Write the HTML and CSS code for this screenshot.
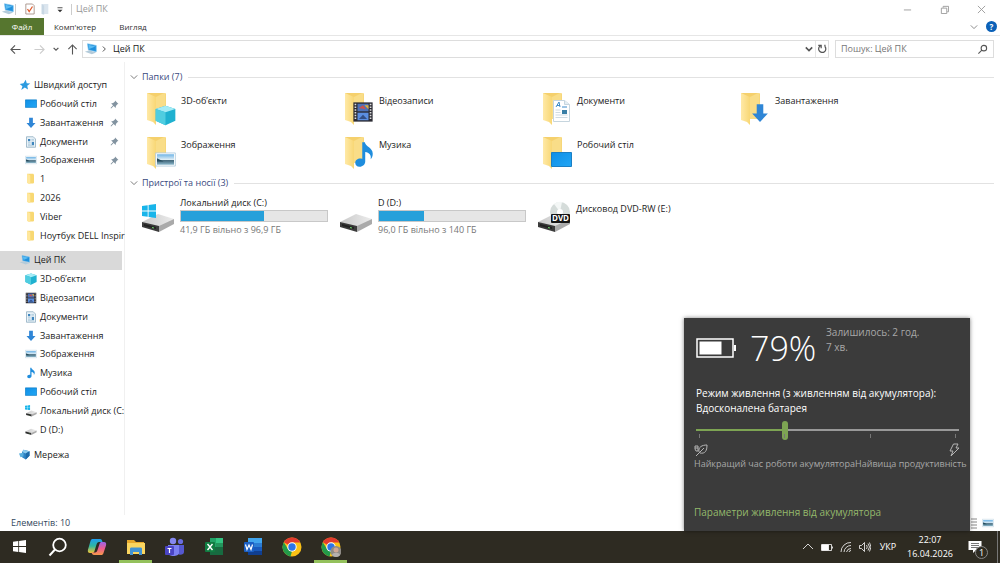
FILE: index.html
```html
<!DOCTYPE html>
<html lang="uk">
<head>
<meta charset="utf-8">
<title>Цей ПК</title>
<meta name="viewport" content="width=device-width, initial-scale=1.0">
<link rel="stylesheet" href="styles.css">
</head>
<body>
<!-- shared icons -->
<svg class="sprite" aria-hidden="true">
<defs>
<linearGradient id="gFolder" x1="0" x2="1"><stop offset="0" stop-color="#ffe9a6"/><stop offset="1" stop-color="#f8d775"/></linearGradient>
<linearGradient id="gBlue" x1="0" y1="0" x2="1" y2="1"><stop offset="0" stop-color="#0f8fe6"/><stop offset="1" stop-color="#22a6f5"/></linearGradient>
<linearGradient id="gDrive" x1="0" x2="1"><stop offset="0" stop-color="#c9c9c9"/><stop offset="1" stop-color="#ececec"/></linearGradient>
<linearGradient id="gSky" x1="0" y1="0" x2="0" y2="1"><stop offset="0" stop-color="#6fb4e6"/><stop offset=".5" stop-color="#dcecf5"/><stop offset=".6" stop-color="#41677a"/><stop offset="1" stop-color="#8bb8cc"/></linearGradient>
<linearGradient id="gPilot1" x1="0" y1="0" x2="0" y2="1"><stop offset="0" stop-color="#1f9df0"/><stop offset=".5" stop-color="#2fb7a0"/><stop offset="1" stop-color="#f4c534"/></linearGradient>
<linearGradient id="gPilot2" x1="0" y1="0" x2="0" y2="1"><stop offset="0" stop-color="#9a63e8"/><stop offset=".5" stop-color="#ec5c8f"/><stop offset="1" stop-color="#f79a4b"/></linearGradient>
</defs>
<symbol id="i-pc" viewBox="0 0 16 16"><path d="M4 2l10 2v7L5 9z" fill="#1f8fdc" stroke="#7ac3ee" stroke-width=".8"/><path d="M5 3l8 2-7 3z" fill="#5bbcf2"/><path d="M1 11l5-1.500 8 2.500-5 2z" fill="#b4cbda"/></symbol>
<symbol id="i-star" viewBox="0 0 16 16"><path d="M9 1l1.300 4.700L15 6l-4 3 1 5-4.300-2.600L3 14.500l1.600-5L1 6.500l5-.8z" fill="#2b9be0"/></symbol>
<symbol id="i-desk" viewBox="0 0 16 16"><path d="M.5 2.500h15v10H.5z" fill="url(#gBlue)" stroke="#1280ca"/></symbol>
<symbol id="i-down" viewBox="0 0 16 16"><path d="M5.500 1h5v7H14l-6 6.500L2 8h3.500z" fill="#2f86d6"/></symbol>
<symbol id="i-doc" viewBox="0 0 16 16"><path d="M2 1h9l3 3v11H2z" fill="#e9f2f8" stroke="#8aa9bd"/><path d="M4 4h3v3H4zM9 8h3v4H9z" fill="#3f86be"/><path d="M8.500 4.500H12M8.500 6.500H12M4 9h3.500M4 11h3.500M4 13h8" stroke="#8fb3cb" stroke-width=".8"/></symbol>
<symbol id="i-pic" viewBox="0 0 16 16"><path d="M.5 3h15v10H.5z" fill="#fff" stroke="#a9c7da" stroke-width=".6"/><path d="M1.500 4h13v8h-13z" fill="url(#gSky)"/><path d="M1.500 7l5 2.500h-5z" fill="#244c5c"/></symbol>
<symbol id="i-fold" viewBox="0 0 16 16"><path d="M3 1h8l1 1v11l-1 1H4l-1-1z" fill="#f8d873"/><path d="M3 1l4 2v12l-4-2z" fill="#ffe79c"/></symbol>
<symbol id="i-cube" viewBox="0 0 16 16"><path d="M8 .5l7.500 2.500v9L8 15.500.5 12V3z" fill="#1fb1d0"/><path d="M8 .5L15.500 3 8 5.500.5 3z" fill="#a5ecf6"/><path d="M.5 3L8 5.500v10L.5 12z" fill="#4fcde0"/></symbol>
<symbol id="i-film" viewBox="0 0 16 16"><path d="M1 1h14v14H1z" fill="#2b2b33"/><path d="M4 2h8v5.500H4z" fill="#4d72b8"/><path d="M4 8.500h8V14H4z" fill="#5b8ee0"/><path d="M5 5l3-2 2 3z" fill="#d0504a"/><path d="M9 3h3v3z" fill="#dfb03c"/><path d="M5 13l3-3 3 3z" fill="#334f85"/><path d="M2.500 2v12M13.500 2v12" stroke="#ddd" stroke-width="1.200" stroke-dasharray="1 1"/></symbol>
<symbol id="i-note" viewBox="0 0 16 16"><path d="M7 1h1.500c.3 2.500 4.500 3 4.500 6.500 0 1.300-.5 2.500-1.200 3.200C12.300 8 11 7 8.700 6.500V12c0 1.700-1.500 3-3.200 3S3 14 3 12.700 4.300 10.300 5.900 10.300c.4 0 .8.100 1.100.2z" fill="#1f8ddd"/></symbol>
<symbol id="i-drive" viewBox="0 0 34 20"><path d="M1 10L17 2l16 5-15 9z" fill="url(#gDrive)"/><path d="M1 10l17 4v6L1 15z" fill="#3b3b3b"/><path d="M18 14l15-7v5l-15 8z" fill="#aaa"/><path d="M3 12l12 3v2L3 14z" fill="#222"/><path d="M11 15.500l2 .5" stroke="#6ed86a"/></symbol>
<symbol id="i-win" viewBox="0 0 16 16"><path d="M0 2.300l6.500-1v6.200H0zM7.500 1.200L16 0v7.500H7.500zM0 8.500h6.500v6.200L0 13.800zM7.500 8.500H16V16l-8.500-1.200z" fill="currentColor"/></symbol>
<symbol id="i-net" viewBox="0 0 16 16"><path d="M6 1l8 2v6l-5 5-5-3V4z" fill="#2d83c4"/><path d="M6 1l8 2-5 3-5-2z" fill="#8ccbee"/><path d="M0 6l6-1v5l-4 1z" fill="#57aede"/><path d="M9 6l5-3v6l-5 5z" fill="#1c69a8"/></symbol>
<symbol id="i-pin" viewBox="0 0 16 16"><path d="M9 1l6 6-2 .5-2.500 3L10 14 6.500 10.500 2 15l-1-1 4.500-4.500L2 6l3.500-.5 3-2.500z" fill="#8293a0"/></symbol>
<symbol id="i-chev" viewBox="0 0 10 10"><path d="M1 3l4 4 4-4" fill="none" stroke="currentColor" stroke-width="1.200"/></symbol>
<symbol id="i-bigfold" viewBox="0 0 32 34"><path d="M2 1h18l1 1v25H7z" fill="#f5d06c"/><path d="M2 1l9 4v28l-3-3-6-2z" fill="url(#gFolder)"/><path d="M11 5l8-4h1.500v26H11z" fill="#f9dd88"/></symbol>
<symbol id="i-chrome" viewBox="0 0 20 20"><circle cx="10" cy="10" r="9.500" fill="#fbc116"/><path d="M10 10L1.800 5.200A9.500 9.500 0 0 1 18.300 5.500H10z" fill="#e33b2e"/><path d="M1.800 5.200l4.300 7 3.900 2-1.500 5.200A9.500 9.500 0 0 1 1.800 5.200z" fill="#229a4a"/><circle cx="10" cy="10" r="4.700" fill="#fff"/><circle cx="10" cy="10" r="3.700" fill="#2d75e8"/></symbol>
</svg>

<div class="window">
<header class="titlebar">
<svg class="ic16 app"><use href="#i-pc"/></svg>
<span class="sep"></span>
<button class="quick" aria-label="Властивості"><svg viewBox="0 0 12 14"><path d="M1 1h8l2 2v10H1z" fill="#fff" stroke="#a08a80"/><path d="M3 7l2 3 4-6" fill="none" stroke="#e0592a" stroke-width="1.500"/></svg></button>
<button class="quick" aria-label="Нова папка"><svg viewBox="0 0 12 14"><path d="M2 1h8v12H2z" fill="#dbe5ee"/><path d="M2 1l3 2v11l-3-1z" fill="#c8d7e4"/></svg></button>
<button class="quick" aria-label="Налаштувати"><svg viewBox="0 0 12 14"><path d="M3 5.500h6" stroke="#333"/><path d="M3 8h6l-3 3z" fill="#333"/></svg></button>
<span class="sep"></span>
<h1>Цей ПК</h1>
<div class="controls">
<button aria-label="Згорнути"><svg viewBox="0 0 10 10"><path d="M1 5.500h8"/></svg></button>
<button aria-label="Відновити"><svg viewBox="0 0 10 10"><path d="M1.500 3.500h6v6h-6zM3.500 3V1.500h6v6H8"/></svg></button>
<button aria-label="Закрити"><svg viewBox="0 0 10 10"><path d="M1 1l8 8M9 1L1 9"/></svg></button>
</div>
</header>

<nav class="tabs">
<button class="file">Файл</button>
<button>Комп'ютер</button>
<button>Вигляд</button>
<div class="tabs-right">
<button class="expand" aria-label="Розгорнути стрічку"><svg class="ic10"><use href="#i-chev"/></svg></button>
<button class="help" aria-label="Довідка">?</button>
</div>
</nav>

<div class="address">
<button aria-label="Назад"><svg viewBox="0 0 12 12"><path d="M11.500 6H1M5.500 1.500L1 6l4.500 4.500"/></svg></button>
<button class="off" aria-label="Вперед"><svg viewBox="0 0 12 12"><path d="M.5 6H11M6.500 1.500L11 6l-4.500 4.500"/></svg></button>
<button class="tiny" aria-label="Останні розташування"><svg viewBox="0 0 10 10"><path d="M1 3l4 4 4-4"/></svg></button>
<button class="up" aria-label="Вгору"><svg viewBox="0 0 12 12"><path d="M6 11.500V1M1.500 5.500L6 1l4.500 4.500"/></svg></button>
<div class="path">
<svg class="ic16"><use href="#i-pc"/></svg>
<svg class="crumb" viewBox="0 0 6 8"><path d="M1 1l3 3-3 3"/></svg>
<span>Цей ПК</span>
<button class="drop" aria-label="Попередні розташування"><svg viewBox="0 0 10 10"><path d="M1 3l4 4 4-4"/></svg></button>
<button class="reload" aria-label="Оновити"><svg viewBox="0 0 12 12"><path d="M9.500 3A4.300 4.300 0 1 1 4 2.200M1.500 1.500H5V5M9.500 3V1" /></svg></button>
</div>
<div class="search">
<input type="search" aria-label="Пошук" placeholder="Пошук: Цей ПК">
<svg viewBox="0 0 12 12"><circle cx="7.500" cy="4.500" r="3"/><path d="M5.300 6.700L1.500 10.500"/></svg>
</div>
</div>

<div class="body">
<aside>
<ul class="tree">
<li class="top"><svg class="ic12"><use href="#i-star"/></svg><a href="#">Швидкий доступ</a></li>
<li><svg class="ic12"><use href="#i-desk"/></svg><a href="#">Робочий стіл</a><svg class="pin"><use href="#i-pin"/></svg></li>
<li><svg class="ic12"><use href="#i-down"/></svg><a href="#">Завантаження</a><svg class="pin"><use href="#i-pin"/></svg></li>
<li><svg class="ic12"><use href="#i-doc"/></svg><a href="#">Документи</a><svg class="pin"><use href="#i-pin"/></svg></li>
<li><svg class="ic12"><use href="#i-pic"/></svg><a href="#">Зображення</a><svg class="pin"><use href="#i-pin"/></svg></li>
<li><svg class="ic12"><use href="#i-fold"/></svg><a href="#">1</a></li>
<li><svg class="ic12"><use href="#i-fold"/></svg><a href="#">2026</a></li>
<li><svg class="ic12"><use href="#i-fold"/></svg><a href="#">Viber</a></li>
<li><svg class="ic12"><use href="#i-fold"/></svg><a href="#">Ноутбук DELL Inspir</a></li>
</ul>
<ul class="tree pc">
<li class="top selected"><svg class="ic12"><use href="#i-pc"/></svg><a href="#">Цей ПК</a></li>
<li><svg class="ic12"><use href="#i-cube"/></svg><a href="#">3D-об’єкти</a></li>
<li><svg class="ic12"><use href="#i-film"/></svg><a href="#">Відеозаписи</a></li>
<li><svg class="ic12"><use href="#i-doc"/></svg><a href="#">Документи</a></li>
<li><svg class="ic12"><use href="#i-down"/></svg><a href="#">Завантаження</a></li>
<li><svg class="ic12"><use href="#i-pic"/></svg><a href="#">Зображення</a></li>
<li><svg class="ic12"><use href="#i-note"/></svg><a href="#">Музика</a></li>
<li><svg class="ic12"><use href="#i-desk"/></svg><a href="#">Робочий стіл</a></li>
<li><svg class="ic12 cyan" viewBox="0 0 16 16"><use href="#i-win" width="7" height="7"/><use href="#i-drive" x="1" y="6" width="15" height="10"/></svg><a href="#">Локальний диск (C:</a></li>
<li><svg class="ic12" viewBox="0 0 16 16"><use href="#i-drive" y="5" width="16" height="10"/></svg><a href="#">D (D:)</a></li>
</ul>
<ul class="tree net">
<li class="top"><svg class="ic12"><use href="#i-net"/></svg><a href="#">Мережа</a></li>
</ul>
</aside>

<main>
<h2><svg class="ic10"><use href="#i-chev"/></svg>Папки (7)</h2>
<div class="tiles">
<a class="tile" href="#"><svg viewBox="0 0 32 34"><use href="#i-bigfold"/><use href="#i-cube" x="10" y="13" width="21" height="21"/></svg><span>3D-об’єкти</span></a>
<a class="tile" href="#"><svg viewBox="0 0 32 34"><use href="#i-bigfold"/><use href="#i-film" x="9" y="8" width="22" height="24"/></svg><span>Відеозаписи</span></a>
<a class="tile" href="#"><svg viewBox="0 0 32 34"><use href="#i-bigfold"/><path d="M12.500 8.500h11l5 4v17h-16z" fill="#fff" stroke="#c6d5de"/><path d="M23.500 8.500v4h5" fill="#e4eef4" stroke="#c6d5de"/><path d="M15 15l3-5 1 5M16 13.500h3M21 15h5" stroke="#3c8bc9" fill="none"/><path d="M21 18h5v4h-5z" fill="#3a7fa6"/><path d="M14.500 18h5M14.500 20.500h5M14.500 23h12M14.500 25.500h12" stroke="#c3d2dc" stroke-width=".8"/></svg><span>Документи</span></a>
<a class="tile" href="#"><svg viewBox="0 0 32 34"><use href="#i-bigfold"/><use href="#i-down" x="10" y="11" width="22" height="21"/></svg><span>Завантаження</span></a>
<a class="tile" href="#"><svg viewBox="0 0 32 34"><use href="#i-bigfold"/><use href="#i-pic" x="10" y="13" width="21" height="21"/></svg><span>Зображення</span></a>
<a class="tile" href="#"><svg viewBox="0 0 32 34"><use href="#i-bigfold"/><use href="#i-note" x="7" y="4" width="28" height="29"/></svg><span>Музика</span></a>
<a class="tile" href="#"><svg viewBox="0 0 32 34"><use href="#i-bigfold"/><path d="M10.500 16.500h20v14h-20z" fill="url(#gBlue)" stroke="#1b7fc4"/></svg><span>Робочий стіл</span></a>
</div>

<h2><svg class="ic10"><use href="#i-chev"/></svg>Пристрої та носії (3)</h2>
<div class="tiles drives">
<a class="drive" href="#"><svg class="cyan" viewBox="0 0 34 32"><use href="#i-drive" y="11" width="34" height="20"/><use href="#i-win" x="1" y="3" width="14" height="14"/></svg>
<div><b>Локальний диск (C:)</b><div class="bar"><i style="width: 57%"></i></div><small>41,9 ГБ вільно з 96,9 ГБ</small></div></a>
<a class="drive" href="#"><svg viewBox="0 0 34 32"><use href="#i-drive" y="11" width="34" height="20"/></svg>
<div><b>D (D:)</b><div class="bar"><i style="width: 31%"></i></div><small>96,0 ГБ вільно з 140 ГБ</small></div></a>
<a class="drive dvd" href="#"><svg viewBox="0 0 34 32"><use href="#i-drive" y="11" width="34" height="20"/><circle cx="23" cy="11" r="10" fill="#d5dcda"/><path d="M23 11L17 3a10 10 0 0 1 8-2z" fill="#f4f7f6"/><circle cx="23" cy="11" r="3" fill="#fff"/><rect x="14" y="13" width="19" height="9" rx="1" fill="#151515"/><text x="15" y="20">DVD</text></svg>
<div><b>Дисковод DVD-RW (E:)</b></div></a>
</div>
</main>
</div>

<footer class="status">
<span>Елементів: 10</span>
<div class="views">
<button aria-label="Подробиці"><svg viewBox="0 0 12 12"><path d="M1 2h2M5 2h6M1 5h2M5 5h6M1 8h2M5 8h6M1 11h2M5 11h6" stroke="#888"/></svg></button>
<button aria-label="Великі ескізи"><svg><use href="#i-pic"/></svg></button>
</div>
</footer>
</div>

<section class="battery">
<div class="charge">
<svg class="cell" viewBox="0 0 40 20"><path d="M1 1h36v18H1z" fill="none" stroke="#fff" stroke-width="1.500"/><path d="M38 7h2v6h-2z" fill="#fff"/><path d="M3.500 3.500h22v13h-22z" fill="#fff"/></svg>
<strong>79%</strong>
<p>Залишилось: 2 год.<br>7 хв.</p>
</div>
<label for="mode">Режим живлення (з живленням від акумулятора): Вдосконалена батарея</label>
<input type="range" id="mode" min="0" max="3" value="1">
<div class="ticks"><i></i><i></i><i></i><i></i></div>
<div class="ends">
<div><svg viewBox="0 0 14 14"><path d="M5 9c-1-5 3-7 8-7 0 6-2 9-7 8M2 13l8-8M1 3h3v5H2L1 6zM1 5h3"/></svg><span>Найкращий час роботи акумулятора</span></div>
<div><svg viewBox="0 0 14 14"><path d="M6.500 1H11L9 5h3L4 13l2-5H3z"/></svg><span>Найвища продуктивність</span></div>
</div>
<a href="#">Параметри живлення від акумулятора</a>
</section>

<div class="taskbar">
<button class="start" aria-label="Пуск"><svg class="s14"><use href="#i-win"/></svg></button>
<button aria-label="Пошук"><svg viewBox="0 0 20 20"><circle cx="11.500" cy="8" r="6.300" fill="none" stroke="#fff" stroke-width="1.800"/><path d="M7 12.500L1.500 18.500" stroke="#fff" stroke-width="2"/></svg></button>
<button aria-label="Copilot"><svg viewBox="0 0 20 20"><path d="M6 2h7c1.500 0 2 1 2.500 3H12c-1.500 0-2 1-2.500 2.500L7.500 14c-.5 1.500-1 2-2.500 2H3c-2 0-2.500-1.500-2-3.500L3.500 4C4 2.500 4.500 2 6 2z" fill="url(#gPilot1)"/><path d="M14 18H7c-1.500 0-2-1-2.500-2.500H8c1.500 0 2-1 2.500-2.500l2-6c.5-1.500 1-2 2.500-2h2c2 0 2.500 1.500 2 3.500L16.500 16c-.5 1.500-1 2-2.500 2z" fill="url(#gPilot2)"/></svg></button>
<button class="running" aria-label="Провідник"><svg viewBox="0 0 20 20"><path d="M1 3h7l2 2h8v3H1z" fill="#e7a92c"/><path d="M1 6h18v11H1z" fill="#fbd660"/><path d="M4 18v-6c0-1 .5-1.500 1.500-1.500h9c1 0 1.500.5 1.500 1.500v6h-3v-3H7v3z" fill="#4293d3"/></svg></button>
<button aria-label="Teams"><svg viewBox="0 0 20 20"><circle cx="8" cy="4" r="3.200" fill="#8588f0"/><circle cx="15.500" cy="4.500" r="2.600" fill="#6a6de0"/><path d="M12 8h7v7c0 3-5 4-7 1z" fill="#5558d0"/><path d="M3 8h11v8c0 4-11 4-11 0z" fill="#7b7ff2"/><rect y="9" width="9" height="9" rx="1" fill="#4a44c4"/><path d="M2.500 11.500h4M4.500 11.500V16" stroke="#fff" stroke-width="1.200"/></svg></button>
<button aria-label="Excel"><svg viewBox="0 0 20 20"><path d="M6 1h6v9H6z" fill="#21a366"/><path d="M12 1h7v5h-7z" fill="#33c481"/><path d="M12 6h7v4h-7z" fill="#23965c"/><path d="M6 10h13v8H6z" fill="#176b40"/><rect x="1" y="5" width="10" height="10" rx="1" fill="#107c41"/><path d="M3.500 7l5 6M8.500 7l-5 6" stroke="#fff" stroke-width="1.400"/></svg></button>
<button aria-label="Word"><svg viewBox="0 0 20 20"><path d="M5 1h14v5H5z" fill="#41a5ee"/><path d="M5 6h14v4H5z" fill="#2b7cd3"/><path d="M5 10h14v4H5z" fill="#185abd"/><path d="M5 14h14v4H5z" fill="#103f91"/><rect x="1" y="5" width="10" height="10" rx="1" fill="#1a5fc4"/><path d="M2.500 7.500l1.500 5 2-4.500 2 4.500 1.500-5" fill="none" stroke="#fff" stroke-width="1.200"/></svg></button>
<button aria-label="Chrome"><svg><use href="#i-chrome"/></svg></button>
<button class="running" aria-label="Chrome, профіль"><svg viewBox="0 0 20 20"><use href="#i-chrome"/><circle cx="15" cy="14.500" r="5.500" fill="#8f8b86"/><circle cx="15" cy="13" r="2.500" fill="#d0a795"/><path d="M11 18c1-3 7-3 8 0-2 2.500-6 2.500-8 0z" fill="#b6b0ae"/></svg></button>

<div class="tray">
<button aria-label="Приховані піктограми"><svg viewBox="0 0 12 12"><path d="M1 8l5-5 5 5"/></svg></button>
<button aria-label="Батарея"><svg viewBox="0 0 12 12"><path d="M.5 3.500h10v6H.5zM11.500 5.500v2"/><path d="M1 4h6.500v5H1z" fill="#fff"/></svg></button>
<button aria-label="Мережа"><svg viewBox="0 0 12 12"><path d="M1 11A9.500 9.500 0 0 1 11 1.500M4 11A7 7 0 0 1 11 4.500M6.500 11A4.500 4.500 0 0 1 11 7.500M9 11a2 2 0 0 1 2-1.500"/></svg></button>
<button aria-label="Гучність"><svg viewBox="0 0 12 12"><path d="M.5 4.500h2L5.500 1.500v9l-3-3h-2zM7.500 4q1.500 2 0 4M9 2.500q3 3.500 0 7M10.500 1.500q3 4.500 0 9"/></svg></button>
<button class="lang">УКР</button>
<button class="clock"><time>22:07</time><time>16.04.2026</time></button>
<button class="notes" aria-label="Сповіщення"><svg viewBox="0 0 14 14"><path d="M.5 1h13v9H8l-3 3v-3H.5z" fill="#fff"/><path d="M3 3.500h8M3 5.500h8M3 7.500h8" stroke="#555" stroke-width=".8"/></svg><span>1</span></button>
</div>
</div>
</body>
</html>
```
FILE: styles.css
```css
* { box-sizing: border-box; }
body {
    margin: 0;
    display: flex;
    flex-direction: column;
    height: 100vh;
    overflow: hidden;
    position: relative;
    background: #fff;
    color: #222;
    font: 9px/14px "Open Sans", "Noto Sans", sans-serif;
}
button {
    border: 0;
    padding: 0;
    background: none;
    color: inherit;
    font: inherit;
    display: flex;
    align-items: center;
    justify-content: center;
}
a { color: inherit; text-decoration: none; }
svg { display: block; flex: none; }
.sprite { position: absolute; width: 0; height: 0; }
.ic16 { width: 14px; height: 14px; }
.ic12 { width: 12px; height: 12px; }
.ic10 { width: 8px; height: 8px; }
.cyan { color: #19b5ea; }

.window {
    flex: 1;
    min-height: 0;
    display: flex;
    flex-direction: column;
}

/* title */
.titlebar {
    display: flex;
    align-items: center;
    height: 18px;
    padding-left: 1px;
    color: #999;
}
.sep { width: 1px; height: 11px; background: #ccc; }
.quick { width: 15px; }
.quick svg { width: 10px; height: 12px; }
.titlebar .app + .sep { margin-right: 6px; }
.titlebar .quick + .sep { margin-left: 4px; }
h1 { margin: 0 0 0 4px; font-size: 9px; font-weight: 400; }
.controls { display: flex; margin-left: auto; }
.controls button { width: 37px; height: 18px; }
.controls svg { width: 9px; height: 9px; fill: none; stroke: #999; stroke-width: 1; }

/* ribbon tabs */
.tabs {
    display: flex;
    height: 18px;
    border-bottom: 1px solid #e6e6e6;
    font-size: 8px;
}
.tabs > button { width: 54px; margin-left: 4px; color: #333; }
.tabs > .file { width: 44px; margin: 0; background: #56762f; color: #fff; }
.tabs-right { display: flex; align-items: center; gap: 8px; margin-left: auto; padding-right: 3px; color: #888; }
.help {
    width: 11px;
    height: 11px;
    border-radius: 50%;
    background: #0b61b8;
    color: #fff;
    font-weight: 700;
}

/* address line */
.address {
    display: flex;
    align-items: center;
    height: 26px;
    padding: 0 6px 0 9px;
}
.address svg { width: 11px; height: 11px; }
.address svg:not(.ic16) { fill: none; stroke: #555; stroke-width: 1.2; }
.address > button { width: 12px; margin-right: 12px; }
.address > .off { margin-right: 7px; }
.address > .off svg { stroke: #ccc; }
.address > .tiny { width: 7px; margin-right: 7px; }
.address > .tiny svg { width: 6px; height: 6px; stroke-width: 2; }
.address > .up { margin-right: 4px; }
.path, .search {
    display: flex;
    align-items: center;
    height: 18px;
    border: 1px solid #ddd;
}
.path { flex: 1; padding-left: 1px; }
.path .ic16 { width: 14px; height: 14px; }
.path .crumb { width: 5px; height: 8px; margin: 0 6px 0 4px; }
.path .drop { margin-left: auto; width: 13px; }
.path .drop svg { width: 8px; height: 8px; stroke-width: 2; }
.path .reload { width: 13px; height: 16px; border-left: 1px solid #e5e5e5; }
.path .reload svg { width: 10px; height: 10px; stroke-width: 1.5; }
.search { width: 159px; margin-left: 6px; padding: 0 5px; }
.search input {
    flex: 1;
    min-width: 0;
    padding: 0;
    border: 0;
    outline: 0;
    font: inherit;
}
.search input::placeholder { color: #777; }

/* tree */
.body { flex: 1; min-height: 0; display: flex; }
aside {
    width: 125px;
    padding: 14px 2px 0 0;
    border-right: 1px solid #f0f0f0;
}
.tree {
    display: grid;
    grid-auto-rows: 1fr;
    height: 169px;
    margin: 0;
    padding: 0;
    list-style: none;
}
.tree.pc { height: 188px; margin-top: 6px; }
.tree.net { height: 19px; margin-top: 6px; }
.tree li {
    display: flex;
    align-items: center;
    gap: 3px;
    min-width: 0;
    padding-left: 25px;
    white-space: nowrap;
}
.tree .top { padding-left: 19px; }
.tree .selected { background: #d9d9d9; }
.pin { width: 9px; height: 9px; margin: 0 3px 0 auto; }

/* content */
main { flex: 1; min-width: 0; padding: 7px 6px 0 5px; }
h2 {
    display: flex;
    align-items: center;
    gap: 4px;
    height: 16px;
    margin: 0;
    color: #3a4a80;
    font-size: 9px;
    font-weight: 400;
}
h2 svg { color: #777; }
h2::after { content: ""; flex: 1; height: 1px; margin-left: 2px; background: #e2e2e2; }
.tiles {
    display: grid;
    grid-template-columns: repeat(auto-fill, 198px);
    grid-auto-rows: 34px;
    row-gap: 10px;
    padding: 7px 0 0 11px;
    margin-bottom: 5px;
}
.tiles.drives { padding-top: 5px; grid-auto-rows: auto; }
.tile { display: flex; gap: 4px; padding-left: 4px; }
.tile svg { width: 32px; height: 34px; }
.tile span { padding-top: 2px; }
.drive { display: flex; gap: 5px; }
.drive > svg { width: 34px; height: 32px; margin-top: 5px; }
.drive b { display: block; font-weight: 400; }
.drive text { fill: #fff; font-size: 8px; font-weight: 700; }
.bar { width: 148px; height: 12px; border: 1px solid #c8c8c8; background: #e6e6e6; }
.bar i { display: block; height: 10px; background: #26a0da; }
.drive small { color: #777; font-size: 9px; line-height: 16px; }
.dvd b { padding-top: 6px; }

.status {
    display: flex;
    align-items: center;
    justify-content: space-between;
    height: 16px;
    padding: 0 6px 0 11px;
    color: #33475c;
}
.views { display: flex; gap: 4px; }
.views svg { width: 12px; height: 12px; }

/* battery flyout */
.battery {
    position: absolute;
    right: 30px;
    bottom: 32px;
    width: 286px;
    height: 213px;
    padding: 7px 10px 0 12px;
    background: #3b3b3b;
    color: #fff;
    font-size: 10px;
    box-shadow: 0 0 4px rgba(0,0,0,0.5);
}
.charge { display: flex; height: 61px; }
.cell { width: 40px; height: 20px; margin-top: 13px; }
.charge strong { width: 76px; margin-left: 14px; font-size: 34px; line-height: 46px; font-weight: 300; }
.charge p { margin: 0; color: #a8a8a8; line-height: 15px; }
.battery label { display: block; line-height: 15px; }
.battery input {
    display: block;
    width: 263px;
    height: 20px;
    margin: 4px 0 0;
    appearance: none;
    background: linear-gradient(to right, #7da453 34%, #999 34%) center / 100% 2px no-repeat;
}
.battery input::-webkit-slider-thumb {
    appearance: none;
    width: 6px;
    height: 19px;
    border-radius: 3px;
    background: #7da453;
}
.ticks { display: flex; justify-content: space-between; width: 263px; margin-top: -6px; padding: 0 3px; }
.ticks i { width: 1px; height: 4px; background: #777; }
.ends {
    display: flex;
    justify-content: space-between;
    margin: 5px 0 0 -2px;
    color: #a8a8a8;
    font-size: 9px;
    white-space: nowrap;
}
.ends svg { width: 14px; height: 14px; fill: none; stroke: #b5b5b5; }
.ends div:last-child svg { margin: 0 5px 0 auto; }
.battery a { display: block; margin: 34px 0 0 -2px; color: #94b96b; }

/* taskbar */
.taskbar { display: flex; height: 32px; background: #2e2b22; color: #fff; }
.taskbar > button { width: 39px; border-bottom: 3px solid transparent; border-top: 2px solid transparent; }
.taskbar > .start { width: 38px; }
.taskbar > button svg { width: 20px; height: 20px; }
.taskbar > button .s14 { width: 13px; height: 13px; }
.taskbar > .running { width: 33px; margin: 0 3px; border-bottom-color: #94c15c; }
.tray { display: flex; margin-left: auto; padding-right: 2px; }
.tray button { width: 19px; }
.tray svg { width: 12px; height: 12px; fill: none; stroke: #fff; stroke-width: 0.8; }
.tray .lang { width: 28px; }
.tray .clock { flex-direction: column; width: 56px; }
.tray .notes { position: relative; width: 40px; border-right: 1px solid #777; }
.tray .notes svg { width: 14px; height: 14px; margin-right: 6px; stroke: none; }
.notes span {
    position: absolute;
    left: 17px;
    top: 15px;
    width: 13px;
    height: 13px;
    border: 1px solid #888;
    border-radius: 50%;
    background: #2e2b22;
    line-height: 11px;
}
```
